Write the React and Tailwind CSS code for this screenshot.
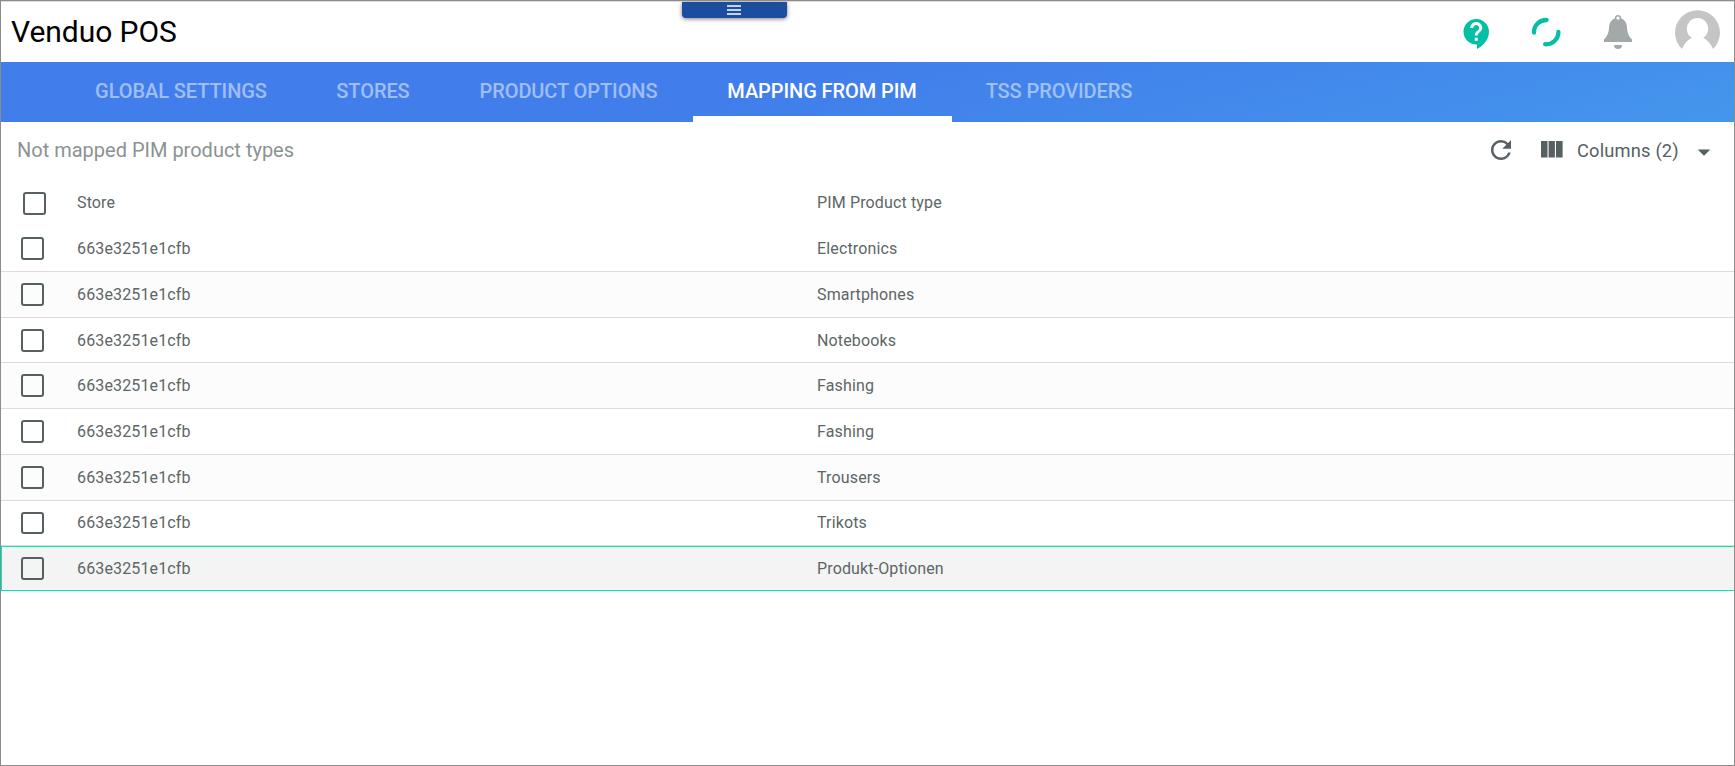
import { MdRefresh, MdArrowDropDown } from "react-icons/md";

const tabs = [
  { label: "GLOBAL SETTINGS", width: "w-[241px]" },
  { label: "STORES", width: "w-[143px]" },
  { label: "PRODUCT OPTIONS", width: "w-[248px]" },
  { label: "MAPPING FROM PIM", width: "w-[259px]", active: true },
  { label: "TSS PROVIDERS", width: "w-[215px]" },
];

const rows = [
  "Electronics",
  "Smartphones",
  "Notebooks",
  "Fashing",
  "Fashing",
  "Trousers",
  "Trikots",
  "Produkt-Optionen",
];

function Checkbox() {
  return <div className="size-[22.86px] rounded-[3px] border-2 border-[#566063]" />;
}

function Header() {
  return (
    <header className="relative flex h-[61px] shrink-0 items-start border-t border-[#dcdcdc]">
      <h1 className="mt-[8px] ml-[10px] text-[30px] leading-[44px] tracking-[-0.05px] text-black">
        Venduo POS
      </h1>
      <button className="absolute top-0 left-[681px] flex h-4 w-[105px] justify-center rounded-b bg-[#1c4d9f] pt-[3px] pr-px shadow-[0_1px_4px_rgba(0,0,0,0.5)]">
        <svg width="14" height="11" viewBox="0 0 14 11" fill="#fff">
          <path d="M0 .2h14v1.500H0zM0 4.200h14v1.500H0zM0 8.200h14v1.500H0z" />
        </svg>
      </button>
      <div className="ml-auto flex">
        <svg className="mt-[14px]" width="36" height="36" viewBox="0 0 24 24" fill="#02bfa5">
          <path d="M11.5 2C6.81 2 3 5.81 3 10.5S6.81 19 11.5 19h.5v3c4.86-2.34 8-7 8-11.5C20 5.81 16.19 2 11.5 2zm1 14.5h-2v-2h2v2zm0-3.5h-2c0-3.25 3-3 3-5 0-1.1-.9-2-2-2s-2 .9-2 2h-2c0-2.21 1.79-4 4-4s4 1.79 4 4c0 2.5-3 2.75-3 5z" />
        </svg>
        <svg className="mt-[15px] ml-[36px]" width="30" height="30" viewBox="0 0 30 30" fill="none" stroke="#02bfa5" strokeWidth="4.300" strokeLinecap="round">
          <path d="M3 15.500A12.200 12.200 0 0 1 15.600 3M27.400 14.900A12.200 12.200 0 0 1 14.200 27.200" />
        </svg>
        <svg className="mt-[13px] ml-[43px]" width="28" height="34" viewBox="0 0 28 34" fill="#a3a9a9">
          <path fillRule="evenodd" d="M14 0a3 3 0 0 1 3 3.200c3.500 1.300 5.700 4.400 5.900 8.300.3 5.200.9 8.600 5.100 13.100V27H0v-2.400c4.200-4.500 4.800-7.900 5.100-13.100.2-3.900 2.400-7 5.900-8.300A3 3 0 0 1 14 0zm0 1.400a1.700 1.700 0 1 0 0 3.400 1.700 1.700 0 0 0 0-3.400z" />
          <path d="M10 30h8a4 4 0 0 1-8 0z" />
        </svg>
        <svg className="mt-[8px] mr-[14px] ml-[43px]" width="45" height="40" viewBox="0 0 45 40" fill="#c5c5c5">
          <path fillRule="evenodd" d="M7 39A22.500 22.500 0 1 1 38 39C35.800 34 32.500 29.800 28.300 27.800A10.700 10.700 0 1 0 16.700 27.800C12.500 29.800 9.200 34 7 39z" />
        </svg>
      </div>
    </header>
  );
}

function Tabs() {
  return (
    <nav className="flex h-[60px] shrink-0 bg-[linear-gradient(165deg,#417eeb_0%,#417eeb_45%,#4496ec_100%)] pl-[60px]">
      {tabs.map((tab) => (
        <div
          key={tab.label}
          className={`flex shrink-0 items-center justify-center border-b-[6px] pt-[4px] pr-px text-[20px] leading-6 font-medium tracking-[-0.08px] whitespace-nowrap ${tab.width} ${
            tab.active ? "border-white text-white" : "border-transparent text-white/50"
          }`}
        >
          {tab.label}
        </div>
      ))}
    </nav>
  );
}

function Toolbar() {
  return (
    <div className="flex h-[58px] shrink-0 items-center pb-[2px] text-[20px] text-[#566063]">
      <h2 className="ml-4 text-[#8b9392]">Not mapped PIM product types</h2>
      <div className="ml-auto flex items-center pr-[15px]">
        <MdRefresh size={30} />
        <svg className="mb-px ml-[25px]" width="22" height="17" viewBox="0 0 22 17" fill="currentColor">
          <path d="M0 0h6.500v16.500H0zM7.600 0h6.300v16.500H7.600zM15 0h6.600v16.500H15z" />
        </svg>
        <span className="ml-[14px] w-[102px] pt-px text-[18.300px] tracking-[0.18px] whitespace-nowrap">
          Columns (2)
        </span>
        <MdArrowDropDown size={30} className="mt-1 ml-[10px]" />
      </div>
    </div>
  );
}

export default function App() {
  return (
    <div className="flex h-[766px] w-[1735px] flex-col overflow-hidden border border-[#8c8c8c] bg-white font-[Roboto,sans-serif]">
      <Header />
      <Tabs />
      <Toolbar />
      <main className="text-base tracking-[0.14px] text-[#5d6666]">
        <div className="flex h-[46.3px] items-center">
          <div className="w-[76px] pl-[22px]">
            <Checkbox />
          </div>
          <div className="w-[740px]">Store</div>
          <div>PIM Product type</div>
        </div>
        {rows.map((type, i) => {
          const selected = i === rows.length - 1;
          return (
            <div
              key={i}
              className={`flex items-center pt-[0.9px] ${
                selected
                  ? "h-[45px] border-y border-l border-[#00e9bf] bg-[#f4f4f4]"
                  : i % 2
                    ? "h-[45.72px] border-b border-[#dcdcdc] bg-[#fcfcfc]"
                    : "h-[45.72px] border-b border-[#dcdcdc]"
              }`}
            >
              <div className={selected ? "w-[75px] pb-[0.9px] pl-[19px]" : "w-[76px] pb-[0.9px] pl-5"}>
                <Checkbox />
              </div>
              <div className="w-[740px]">663e3251e1cfb</div>
              <div>{type}</div>
            </div>
          );
        })}
      </main>
    </div>
  );
}
